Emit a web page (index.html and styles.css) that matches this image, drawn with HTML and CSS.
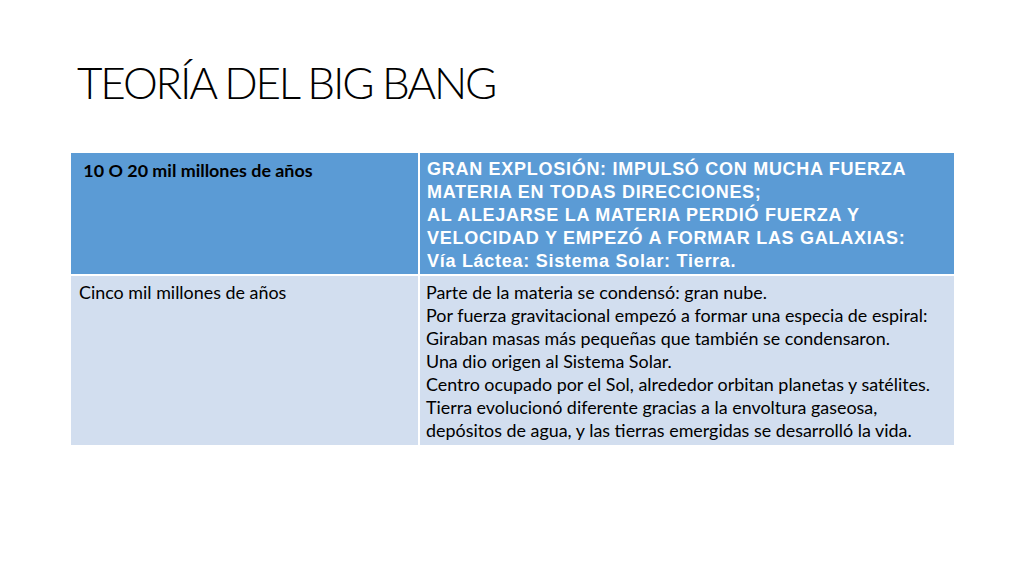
FILE: index.html
```html
<!DOCTYPE html>
<html lang="es">
<head>
<meta charset="utf-8">
<title>Teoría del Big Bang</title>
<link rel="stylesheet" href="styles.css">
</head>
<body>
<div class="slide">
  <h1 class="title">TEORÍA DEL BIG BANG</h1>
  <table class="tbl">
    <tr class="row-head">
      <td class="c1 head-left">&nbsp;10 O 20 mil millones de años</td>
      <td class="c2 head-right">GRAN EXPLOSIÓN: IMPULSÓ CON MUCHA FUERZA<br>MATERIA EN TODAS DIRECCIONES;<br>AL ALEJARSE LA MATERIA PERDIÓ FUERZA Y<br>VELOCIDAD Y EMPEZÓ A FORMAR LAS GALAXIAS:<br>Vía Láctea: Sistema Solar: Tierra.</td>
    </tr>
    <tr class="row-body">
      <td class="c1">Cinco mil millones de años</td>
      <td class="c2 body-right">Parte de la materia se condensó: gran nube.<br>Por fuerza gravitacional empezó a formar una especia de espiral:<br>Giraban masas más pequeñas que también se condensaron.<br>Una dio origen al Sistema Solar.<br>Centro ocupado por el Sol, alrededor orbitan planetas y satélites.<br>Tierra evolucionó diferente gracias a la envoltura gaseosa,<br>depósitos de agua, y las tierras emergidas se desarrolló la vida.</td>
    </tr>
  </table>
</div>
</body>
</html>
```

FILE: styles.css
```css
html, body {
  margin: 0;
  padding: 0;
  background: #ffffff;
}
.slide {
  width: 1024px;
  height: 576px;
  overflow: hidden;
  font-family: "Lato", "Open Sans", sans-serif;
  color: #000;
}
.title {
  margin: 0;
  padding: 55px 0 0 77px;
  height: 151px;
  box-sizing: border-box;
  font-family: "Lato", sans-serif;
  font-weight: 300;
  font-size: 44px;
  line-height: 54px;
  letter-spacing: -2.2px;
  color: #000;
}
.tbl {
  margin: 0 0 0 69px;
  border-collapse: separate;
  border-spacing: 2px;
  width: 887px;
  table-layout: fixed;
}
.tbl td {
  vertical-align: top;
  padding: 5px 8px 0 8px;
  font-size: 17.9px;
  line-height: 23px;
  box-sizing: border-box;
  white-space: nowrap;
}
.c1 { width: 347px; }
.c2 { width: 534px; }
.row-head td {
  background: #5b9bd5;
  height: 121px;
  padding-top: 6px;
}
.row-body td {
  background: #d2deef;
  height: 169px;
  padding-top: 5px;
}
.head-left {
  font-weight: 700;
  color: #000;
}
.head-right {
  font-family: "Liberation Sans", Arial, sans-serif;
  font-weight: 700;
  color: #ffffff;
  letter-spacing: 0.72px;
}
.tbl .head-right {
  font-size: 18px;
  padding-left: 7px;
  padding-top: 5px;
}
.row-body .body-right {
  padding-left: 6px;
}
```
